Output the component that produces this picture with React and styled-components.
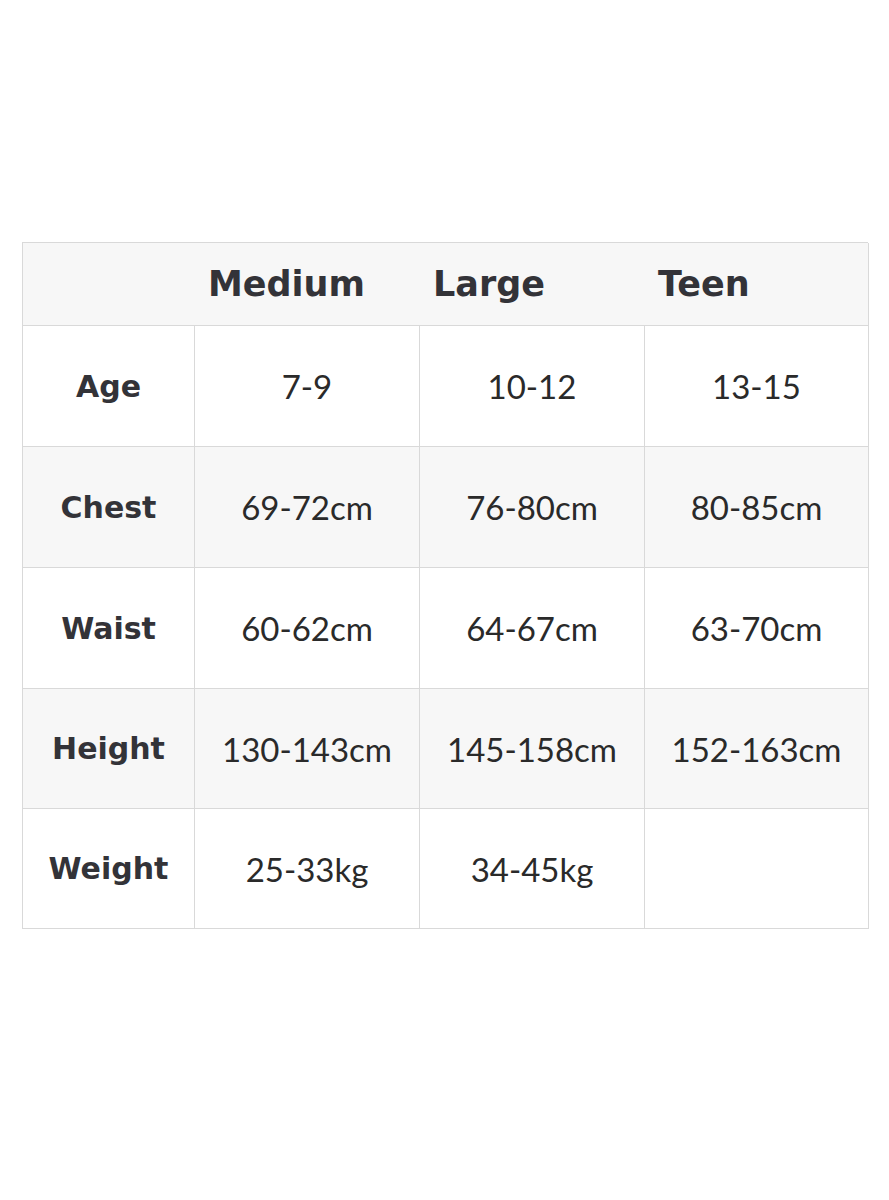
import { createGlobalStyle } from "styled-components";
import styled from "styled-components";

const GlobalStyle = createGlobalStyle`
  body {
    margin: 0;
    background: #ffffff;
    font-family: "Lato", "Noto Sans", sans-serif;
  }
`;

const Page = styled.div`
  width: 889px;
  height: 1200px;
  padding-top: 242px;
  padding-left: 22px;
  box-sizing: border-box;
`;

const Grid = styled.div`
  display: grid;
  grid-template-columns: 172px 225px 225px 224px;
  grid-template-rows: 83px 121px 121px 121px 120px 120px;
  width: 846px;
  box-sizing: border-box;
  border: 1px solid #d9d9d9;
  border-right: none;
  border-bottom: none;
`;

const HeadRow = styled.div`
  grid-column: 1 / -1;
  display: grid;
  grid-template-columns: 172px 225px 225px 224px;
  background: #f7f7f7;
  border-right: 1px solid #d9d9d9;
  border-bottom: 1px solid #d9d9d9;
`;

const HeadCell = styled.div`
  display: flex;
  align-items: center;
  padding-left: 13px;
  font-family: "DejaVu Sans", sans-serif;
  font-size: 35px;
  font-weight: 700;
  color: #333338;
`;

const Cell = styled.div`
  display: flex;
  align-items: center;
  justify-content: center;
  background: ${(p) => (p.$shade ? "#f7f7f7" : "#ffffff")};
  border-right: 1px solid #d9d9d9;
  border-bottom: 1px solid #d9d9d9;
  font-size: 33px;
  color: #2a2a2a;
  font-weight: 400;
`;

const LabelCell = styled(Cell)`
  font-family: "DejaVu Sans", sans-serif;
  font-size: 30px;
  font-weight: 700;
  color: #333338;
`;

const rows = [
  ["Age", "7-9", "10-12", "13-15"],
  ["Chest", "69-72cm", "76-80cm", "80-85cm"],
  ["Waist", "60-62cm", "64-67cm", "63-70cm"],
  ["Height", "130-143cm", "145-158cm", "152-163cm"],
  ["Weight", "25-33kg", "34-45kg", ""],
];

const App = () => {
  return (
    <>
      <GlobalStyle />
      <Page>
        <Grid>
          <HeadRow>
            <HeadCell />
            <HeadCell>Medium</HeadCell>
            <HeadCell>Large</HeadCell>
            <HeadCell>Teen</HeadCell>
          </HeadRow>
          {rows.map((row, i) => {
            const shade = i % 2 === 1;
            return [
              <LabelCell key={`l${i}`} $shade={shade}>
                {row[0]}
              </LabelCell>,
              ...row.slice(1).map((v, j) => (
                <Cell key={`c${i}-${j}`} $shade={shade}>
                  {v}
                </Cell>
              )),
            ];
          })}
        </Grid>
      </Page>
    </>
  );
};

export default App;
